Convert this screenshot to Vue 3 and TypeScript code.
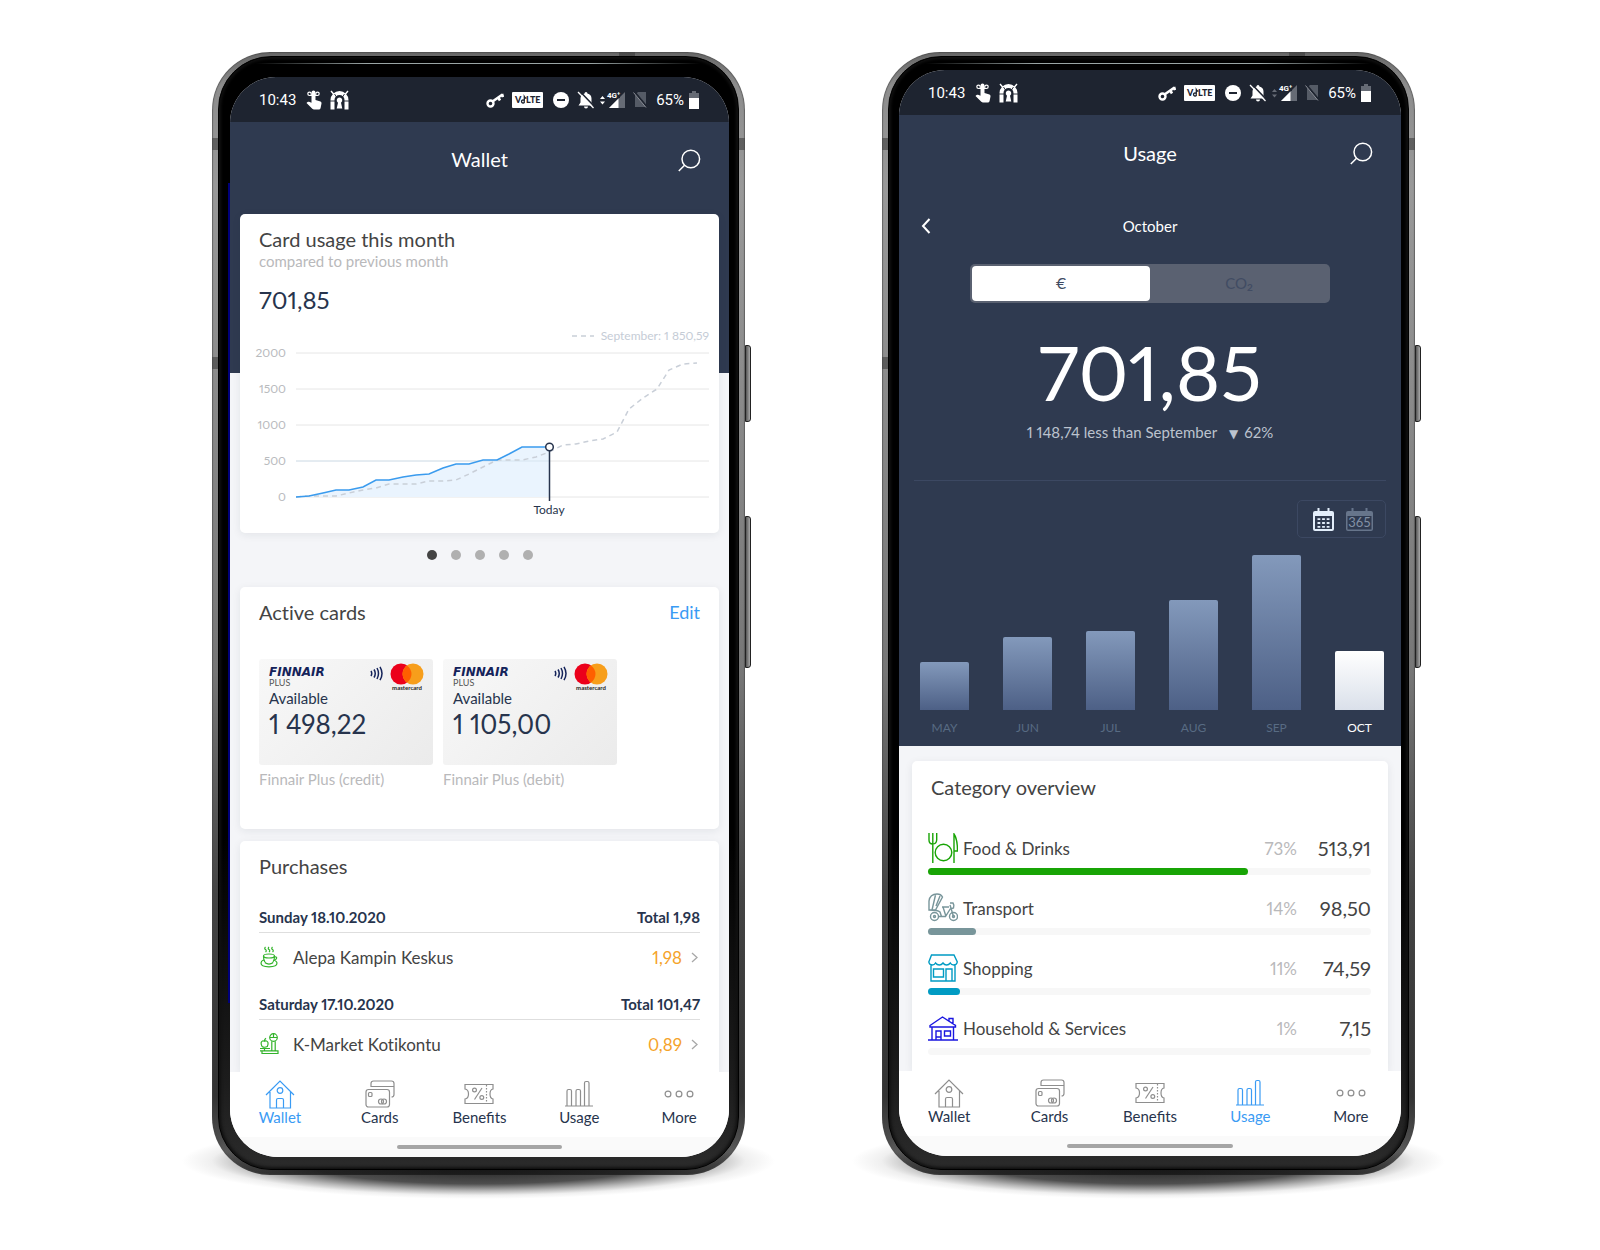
<script setup lang="ts">
interface Tab {
  id: string
  label: string
}
interface Phone {
  id: 'wallet' | 'usage'
  title: string
}
interface Purchase {
  date: string
  total: string
  shop: string
  amount: string
  icon: string
}
interface Category {
  name: string
  share: string
  amount: string
  fill: number
  color: string
  icon: string
}

const phones: Phone[] = [
  { id: 'wallet', title: 'Wallet' },
  { id: 'usage', title: 'Usage' },
]

const tabs: Tab[] = [
  { id: 'wallet', label: 'Wallet' },
  { id: 'cards', label: 'Cards' },
  { id: 'benefits', label: 'Benefits' },
  { id: 'usage', label: 'Usage' },
  { id: 'more', label: 'More' },
]

const gridLines = [
  { label: '2000', y: 27 },
  { label: '1500', y: 63 },
  { label: '1000', y: 99 },
  { label: '500', y: 135 },
  { label: '0', y: 171 },
]

const currentLine =
  '37,171 50,170 64,167 77,164 90,164 104,161 117,154 130,154 144,151 157,149 170,148 184,142 197,138 210,138 224,134 238,134 250,128 263,121 290,121'
const previousLine =
  '37,171 50,170 64,170 77,170 90,167 104,164 117,162 130,158 157,158 170,155 184,155 197,154 210,148 224,141 238,134 263,134 277,131 290,126 304,119 317,118 330,115 344,113 358,106 370,83 384,72 398,63 410,44 424,38 438,37'

const accounts = [
  { balance: '1 498,22', name: 'Finnair Plus (credit)' },
  { balance: '1 105,00', name: 'Finnair Plus (debit)' },
]

const purchases: Purchase[] = [
  { date: 'Sunday 18.10.2020', total: 'Total 1,98', shop: 'Alepa Kampin Keskus', amount: '1,98', icon: 'cup' },
  { date: 'Saturday 17.10.2020', total: 'Total 101,47', shop: 'K-Market Kotikontu', amount: '0,89', icon: 'scale' },
]

const months = [
  { label: 'MAY', height: 48 },
  { label: 'JUN', height: 73 },
  { label: 'JUL', height: 79 },
  { label: 'AUG', height: 110 },
  { label: 'SEP', height: 155 },
  { label: 'OCT', height: 59 },
]

const categories: Category[] = [
  { name: 'Food & Drinks', share: '73%', amount: '513,91', fill: 72.2, color: '#18a405', icon: 'food' },
  { name: 'Transport', share: '14%', amount: '98,50', fill: 10.8, color: '#78959a', icon: 'transport' },
  { name: 'Shopping', share: '11%', amount: '74,59', fill: 7.2, color: '#009bc3', icon: 'shopping' },
  { name: 'Household & Services', share: '1%', amount: '7,15', fill: 0, color: '#1a16e0', icon: 'house' },
]
</script>

<template>
  <main class="stage">
    <section v-for="phone in phones" :key="phone.id" class="phone" :class="phone.id">
      <span class="side-key volume"></span>
      <span class="side-key power"></span>
      <div class="screen">
        <div class="status">
          <span>10:43</span>
          <svg class="hand" width="16" height="20" viewBox="0 0 16 20" fill="#fff">
            <path d="M5.500 2.500a2 2 0 0 1 4 0V10l5 1.500q1.200.5 1 2L14.600 18q-.3 1.500-1.800 1.500H8q-1 0-1.700-.8L.5 13l1-1q.6-.5 1.500-.2l2.500.9Z" />
            <path d="M7.500 5.500H3.500a1.700 1.700 0 1 1 1.700-1.700V5.500M7.500 5.500h4a1.700 1.700 0 1 0-1.700-1.700V5.500" fill="none" stroke="#fff" stroke-width="1.200" />
          </svg>
          <svg width="19" height="20" viewBox="0 0 19 20">
            <path d="M2.500 19.500V10a7 7 0 0 1 14 0V19.500" fill="none" stroke="#fff" stroke-width="4" />
            <path d="M1 1l3 3.500M18 1l-3 3.500" stroke="#fff" stroke-width="1.400" />
            <path d="M0 11h5M14 11h5M4.500 4l2 3M14.500 4l-2 3" stroke="#1e2430" stroke-width="0.900" />
            <path d="M9.500 7.500a2.900 2.900 0 0 1 1.500 5.300l1.300 5.700h-5.600l1.300-5.700a2.900 2.900 0 0 1 1.500-5.300Z" fill="#fff" />
          </svg>
          <span class="spacer"></span>
          <svg width="18" height="18" viewBox="0 0 18 18" fill="none" stroke="#fff">
            <circle cx="4.500" cy="12.500" r="3" stroke-width="2.400" />
            <path d="M6.500 10.500 16.500 3.500M16 3l1 3M12 6l2 3.500" stroke-width="2.600" />
          </svg>
          <svg class="volte" width="31" height="16" viewBox="0 0 31 16">
            <rect width="31" height="16" rx="1" fill="#fff" />
            <text x="3" y="11">V</text>
            <path d="M12.500 9.300a1.500 1.500 0 1 0-.2 1V4.500q1 1.700 2.200 1.500" fill="none" stroke="#1e2430" stroke-width="1.300" />
            <text x="14" y="11">LTE</text>
          </svg>
          <svg width="16" height="16" viewBox="0 0 16 16">
            <circle cx="8" cy="8" r="8" fill="#fff" />
            <path d="M4 8h8" stroke="#1e2430" stroke-width="2" />
          </svg>
          <svg class="bell" width="18" height="18" viewBox="0 0 18 18">
            <path d="M9 1a1.400 1.400 0 0 1 1.400 1.500Q14.500 3.500 14.500 7.500V11.500l2 3H1.500l2-3V7.500Q3.500 3.500 7.600 2.500A1.400 1.400 0 0 1 9 1ZM7 15.500h4q0 2-2 2t-2-2Z" fill="#fff" />
            <path d="M2.500 0 17.800 16" stroke="#1e2430" stroke-width="1.600" />
            <path d="M1 1 16.500 17" stroke="#fff" stroke-width="1.300" />
          </svg>
          <svg class="signal" width="26" height="18" viewBox="0 0 26 18">
            <path d="M0 8h5L2.500 5ZM0 10.500h5L2.500 13.500Z" :fill="phone.id === 'wallet' ? '#fff' : '#666b75'" />
            <path d="M25 1v16H9Z" fill="#666b75" />
            <path d="M18.500 7.500V17H9Z" fill="#fff" />
            <rect x="7" y="0" width="13" height="7" fill="#1e2430" />
            <text x="7" y="6.500">4G⁺</text>
          </svg>
          <svg width="14" height="17" viewBox="0 0 14 17">
            <path d="M5 1h8v15H2V4Z" fill="#555b66" />
            <path d="M1.500 1 14 16" stroke="#1e2430" stroke-width="2" />
            <path d="M.5 1.500 13 16.500" stroke="#8a8e96" stroke-width="1" />
          </svg>
          <span>65%</span>
          <svg class="battery" width="10" height="18" viewBox="0 0 10 18">
            <path d="M3 0h4v2h3v5H0V2h3Z" fill="#666b75" />
            <path d="M0 7h10v11H0Z" fill="#fff" />
          </svg>
        </div>

        <header class="appbar">
          <h1>{{ phone.title }}</h1>
          <button class="search" type="button" aria-label="Search">
            <svg width="23" height="23" viewBox="0 0 23 23" fill="none" stroke="#fff" stroke-width="1.500">
              <circle cx="12.800" cy="10" r="8.800" />
              <path d="M6.500 16.200.8 22" />
            </svg>
          </button>
        </header>

        <div v-if="phone.id === 'wallet'" class="wallet-body">
          <article class="card usage-card">
            <h2>Card usage this month</h2>
            <p class="muted">compared to previous month</p>
            <p class="sum">701,85</p>
            <svg class="trend" viewBox="0 0 450 190">
              <path d="M313 10h22" class="previous" />
              <text x="450" y="14" class="legend">September: 1 850,59</text>
              <g v-for="line in gridLines" :key="line.label">
                <path :d="`M37 ${line.y}H450`" stroke="#e6e6e6" />
                <text x="27" :y="line.y + 4" class="axis">{{ line.label }}</text>
              </g>
              <polygon :points="`${currentLine} 290,171`" fill="#eaf4fe" />
              <path d="M37 135H290" stroke="#d6e4ef" />
              <polyline :points="previousLine" class="previous" />
              <polyline :points="currentLine" fill="none" stroke="#3a9bee" stroke-width="1.500" />
              <path d="M290.500 124V175" stroke="#27344d" stroke-width="1.500" />
              <circle cx="290.500" cy="121" r="3.800" fill="#fff" stroke="#27344d" stroke-width="1.500" />
              <text x="290" y="188" class="today">Today</text>
            </svg>
          </article>

          <div class="dots">
            <button v-for="n in 5" :key="n" type="button" :class="{ active: n === 1 }" :aria-label="`Page ${n}`"></button>
          </div>

          <article class="card">
            <div class="card-head">
              <h2>Active cards</h2>
              <a href="#edit">Edit</a>
            </div>
            <div class="accounts">
              <figure v-for="account in accounts" :key="account.name">
                <div class="plastic">
                  <div class="brand">
                    <div>
                      <strong>FINNAIR</strong>
                      <small>PLUS</small>
                    </div>
                    <svg class="waves" width="13" height="15" viewBox="0 0 13 15" fill="none" stroke="#14235a" stroke-width="1.500">
                      <path d="M1 5q1.500 2.500 0 5M4 3.500q2.500 4 0 8M7 2q3 5.500 0 11M10 .8q4 6.700 0 13.400" />
                    </svg>
                    <svg width="34" height="28" viewBox="0 0 34 28">
                      <circle cx="11" cy="11" r="10.500" fill="#eb001b" />
                      <circle cx="23" cy="11" r="10.500" fill="#f79e1b" />
                      <path d="M17 2.400a10.500 10.500 0 0 1 0 17.200a10.500 10.500 0 0 1 0-17.200Z" fill="#ff5f00" />
                      <text x="17" y="27" class="mc">mastercard</text>
                    </svg>
                  </div>
                  <p class="available">Available</p>
                  <p class="balance">{{ account.balance }}</p>
                </div>
                <figcaption>{{ account.name }}</figcaption>
              </figure>
            </div>
          </article>

          <article class="card purchases">
            <h2>Purchases</h2>
            <section v-for="item in purchases" :key="item.date">
              <h3>
                <span>{{ item.date }}</span>
                <span>{{ item.total }}</span>
              </h3>
              <a class="purchase" href="#purchase">
                <svg width="20" height="24" viewBox="0 0 20 24" fill="none" stroke="#32b32a" stroke-width="1.200">
                  <template v-if="item.icon === 'cup'">
                    <path d="M6.500 2q-1.500 1.500 0 2.500t0 2.500M10 2q-1.500 1.500 0 2.500t0 2.500M13.500 2q-1.500 1.500 0 2.500t0 2.500" />
                    <ellipse cx="10" cy="11" rx="5.500" ry="2" />
                    <path d="M4.500 11q0 8 5.500 8t5.500-8M15.500 12q2.800-.5 2 1.500t-3.500 2.500M4.500 15Q2 16 2 18q0 3.800 8 3.800T18 18q0-1-1.500-2M6 17.800q4 2.500 8 0" />
                  </template>
                  <template v-else>
                    <circle cx="14.500" cy="5.500" r="3.800" />
                    <path d="M11 5.500h7M14.500 2v3.500M12.800 9.300v9.500M16.200 9.300v9.500M1 16.500h10M5.500 16.500v2.500M1 18.800h18v2.700H3v-2.700M3 14.500q-2-4.500.5-5.500 1-.2 2 .3 1-.5 2-.3 2.700 1 .8 5.500-2.800 1.500-5.300 0M5.500 8.800q0-1.500 1.500-2.500" />
                  </template>
                </svg>
                <span class="shop">{{ item.shop }}</span>
                <span class="amount">{{ item.amount }}</span>
                <svg width="7" height="11" viewBox="0 0 7 11" fill="none" stroke="#a8a8a8" stroke-width="1.300">
                  <path d="M1 1l5 4.500-5 4.500" />
                </svg>
              </a>
            </section>
          </article>
        </div>

        <div v-else class="usage-body">
          <div class="panel">
            <div class="month">
              <button type="button" aria-label="Previous month">
                <svg width="10" height="16" viewBox="0 0 10 16" fill="none" stroke="#fff" stroke-width="2">
                  <path d="M8.500 1 2 8l6.500 7" />
                </svg>
              </button>
              <span>October</span>
            </div>
            <div class="units">
              <button type="button" class="on">€</button>
              <button type="button">CO<sub>2</sub></button>
            </div>
            <p class="total">701,85</p>
            <p class="delta"><span>1 148,74 less than September</span><span><i>▼</i>62%</span></p>
            <hr />
            <div class="period">
              <button type="button" aria-label="Monthly">
                <svg width="21" height="23" viewBox="0 0 21 23">
                  <path d="M2 3h17q2 0 2 2v16q0 2-2 2H2q-2 0-2-2V5q0-2 2-2ZM2 8v13h17V8Z" fill="#e3eefb" fill-rule="evenodd" />
                  <path d="M5.500 0v5M15.500 0v5" stroke="#e3eefb" stroke-width="2" />
                  <path d="M4.500 11.200h12M4.500 15h12M4.500 18.800h12" stroke="#e3eefb" stroke-width="1.800" stroke-dasharray="2.800 1.800" />
                </svg>
              </button>
              <button type="button" aria-label="Yearly">
                <svg width="27" height="23" viewBox="0 0 27 23">
                  <path d="M2 3h23q2 0 2 2v16q0 2-2 2H2q-2 0-2-2V5q0-2 2-2ZM1.500 8v13.500h24V8Z" fill="#67758b" fill-rule="evenodd" />
                  <path d="M6.500 0v5M20.500 0v5" stroke="#67758b" stroke-width="2" />
                  <text x="13.500" y="19" class="days">365</text>
                </svg>
              </button>
            </div>
            <ul class="bars">
              <li v-for="month in months" :key="month.label" :class="{ current: month.label === 'OCT' }">
                <span class="bar" :style="{ height: month.height + 'px' }"></span>
                <span>{{ month.label }}</span>
              </li>
            </ul>
          </div>

          <article class="card overview">
            <h2>Category overview</h2>
            <div v-for="cat in categories" :key="cat.name" class="category">
              <div class="line">
                <svg width="30" height="30" viewBox="0 0 30 30" fill="none" :stroke="cat.color" stroke-width="1.400">
                  <template v-if="cat.icon === 'food'">
                    <circle cx="15.500" cy="19.500" r="8.300" />
                    <path d="M1 0v7q0 4 3.700 4T8.700 7V0M4.800 0v30M26 30V1q3.500 5 3.500 17h-3.500" />
                  </template>
                  <template v-else-if="cat.icon === 'transport'">
                    <circle cx="6.500" cy="23.500" r="4" />
                    <circle cx="6.500" cy="23.500" r="1" />
                    <circle cx="25.500" cy="23.500" r="4" />
                    <circle cx="25.500" cy="23.500" r="1" />
                    <path d="M1 17V8q1-7 8-7 4 0 5.500 3L7.500 17ZM4 17 7.500 2M1 17q9 0 11 2l1.500 4.500h4l5-8M10 23.500h4M14 14h7M15 14l3 9.500M22 10h3q1.500 2 .5 5l-3 1M25.500 23.500 22 12M8 13 12 3" />
                  </template>
                  <template v-else-if="cat.icon === 'shopping'">
                    <path d="M3.500 2h22.500l3.300 7q-.5 3-3.500 3-2.500 0-3.500-2-1.500 2-3.700 2T15 10q-1.500 2-3.700 2T7.500 10Q6.500 12 4.300 12 1.300 12 .8 9ZM3 12v16h24V12M5.500 16h10v8h-10ZM18 28V16h6v12" />
                  </template>
                  <template v-else>
                    <path d="M2 12.500 14.500 4l13 8.500V14h-25.500ZM21 8V5.500h4V11M4 14v12.500M25.500 14v12.500M0 27h30M8 27v-9h5v9M8 24h5M16.500 18h6v5h-6Z" />
                  </template>
                </svg>
                <span class="name">{{ cat.name }}</span>
                <span class="share">{{ cat.share }}</span>
                <span class="value">{{ cat.amount }}</span>
              </div>
              <div class="track">
                <div :style="{ width: cat.fill + '%', background: cat.color }"></div>
              </div>
            </div>
          </article>
        </div>

        <nav class="tabs">
          <a v-for="tab in tabs" :key="tab.id" :href="`#${tab.id}`" :class="{ active: tab.id === phone.id }">
            <svg width="30" height="30" viewBox="0 0 30 30" fill="none" stroke="currentColor" stroke-width="1.200">
              <path v-if="tab.id === 'wallet'" d="M1 16 15 2l14 14M5 13v16h20.500V13M11.500 29v-8q0-1.500 1.500-1.500h4q1.500 0 1.500 1.500v8M17.800 11.500a2.800 2.800 0 1 1-5.600 0 2.800 2.800 0 0 1 5.600 0" />
              <template v-else-if="tab.id === 'cards'">
                <rect x="1" y="10.500" width="23.500" height="17.500" rx="2.500" />
                <path d="M6 8V4.500Q6 2 8.500 2h18Q29 2 29 4.500v11q0 2.500-2.500 2.500M6 7.500h23" />
                <rect x="3.500" y="13.500" width="3.500" height="4" rx="1" />
                <circle cx="16" cy="22.500" r="2.500" />
                <circle cx="19" cy="22.500" r="2.500" />
              </template>
              <template v-else-if="tab.id === 'benefits'">
                <path d="M1 5.500h28V10q-3 .5-3 5t3 5v4.500H1V20q3.500-.5 3.500-5T1 10Z" />
                <path d="M18 9 10.500 20.500" />
                <path d="M22.500 6v18" stroke-dasharray="1.500 1.500" />
                <circle cx="10.500" cy="11" r="1.900" />
                <circle cx="17.800" cy="18.500" r="1.900" />
              </template>
              <path v-else-if="tab.id === 'usage'" d="M1 27h28M3 27V12q0-1.500 1.500-1.500h1.500q1.500 0 1.500 1.500v15M12 27V12q0-1.500 1.500-1.500h1.500q1.500 0 1.500 1.500v15M20.500 27V4q0-1.500 1.500-1.500h1.500q1.500 0 1.500 1.500v23" />
              <template v-else>
                <circle cx="4" cy="15" r="2.900" />
                <circle cx="15" cy="15" r="2.900" />
                <circle cx="26" cy="15" r="2.900" />
              </template>
            </svg>
            <span>{{ tab.label }}</span>
          </a>
        </nav>
        <div class="gesture"><span></span></div>
      </div>
    </section>
  </main>
</template>

<style>
body {
  margin: 0;
  background: #fff;
}
</style>

<style scoped>
* {
  box-sizing: border-box;
}
h1, h2, h3, p, ul, figure {
  margin: 0;
  padding: 0;
  font-weight: 400;
}
button {
  margin: 0;
  padding: 0;
  border: 0;
  background: none;
  font: inherit;
  color: inherit;
}
a {
  color: inherit;
  text-decoration: none;
}
svg {
  display: block;
  flex: none;
}
.stage {
  display: grid;
  grid-template-columns: 1fr 1fr;
  align-items: start;
  gap: 137px;
  padding: 52px 185px 72px 212px;
  font-family: Lato, "Noto Sans", sans-serif;
  font-variant-ligatures: none;
  font-variant-numeric: proportional-nums;
  color: #27344d;
}

/* Handset */
.phone {
  position: relative;
  z-index: 0;
  min-width: 0;
  padding: 25px 16px 18px 18px;
  border-radius: 58px;
  background:
    linear-gradient(#3338, #3338) 0 86px / 100% 12px no-repeat,
    linear-gradient(#3338, #3338) 0 305px / 8px 12px no-repeat,
    linear-gradient(#3338, #3338) 407px 0 / 16px 8px no-repeat,
    linear-gradient(180deg, #666 0, #8d8d8d 3%, #999 12%, #777 55%, #444 75%, #333 93%, #555 98%, #222 100%);
  box-shadow: inset 0 0 1px 1px #4449;
}
.phone.usage {
  padding: 18px 14px 19px 17px;
}
.phone::before {
  content: "";
  position: absolute;
  z-index: -1;
  inset: 4px 6px 5px;
  border: 1px solid #000;
  border-radius: 53px;
  background:
    linear-gradient(90deg, transparent, #9aa5a5 25%, #9aa5a5 75%, transparent) 50% 6px / 86% 1px no-repeat,
    linear-gradient(#000 0, #000 70%, #1c1c1c 92%, #2b2b2b 100%);
  box-shadow: inset 0 0 3px 2px #111;
}
.phone.wallet::before {
  background:
    linear-gradient(90deg, transparent, #9aa5a5 25%, #9aa5a5 75%, transparent) 50% 6px / 86% 1px no-repeat,
    linear-gradient(#00007a, #00007a) 9px 126px / 2px 820px no-repeat,
    linear-gradient(#000 0, #000 70%, #1c1c1c 92%, #2b2b2b 100%);
}
.phone::after {
  content: "";
  position: absolute;
  z-index: -2;
  left: -30px;
  right: -30px;
  bottom: -24px;
  height: 76px;
  background: radial-gradient(closest-side, #111 0, #222c 60%, #4446 78%, #8882 90%, transparent 100%);
}
.side-key {
  position: absolute;
  left: 100%;
  width: 6px;
  border: 1px solid #222;
  border-radius: 0 3px 3px 0;
  background: linear-gradient(90deg, #555, #aaa);
}
.volume {
  top: 293px;
  height: 77px;
}
.power {
  top: 464px;
  height: 152px;
}
.screen {
  overflow: hidden;
  border-radius: 46px 46px 48px 48px;
  background: #f4f5f8;
}

.status {
  display: flex;
  align-items: center;
  height: 45px;
  padding: 0 30px 0 29px;
  background: #1e2430;
  color: #fff;
  font: 15px/20px Roboto, sans-serif;
}
.status .hand {
  margin: 0 8px 0 10px;
}
.spacer {
  flex: 1;
}
.volte {
  margin: 0 10px 0 8px;
}
.volte text {
  font: 900 9px Lato, sans-serif;
  fill: #1e2430;
}
.bell {
  margin: 0 5px 0 8px;
}
.signal {
  margin-right: 7px;
}
.signal text {
  font: 700 8px Roboto, sans-serif;
  fill: #fff;
}
.status span:last-of-type {
  margin: 0 5px 0 9px;
}

.appbar {
  display: grid;
  grid-template-columns: 1fr auto 1fr;
  align-items: center;
  height: 76px;
  padding: 0 28px;
  background: #2f3a50;
  color: #fff;
}
.usage .appbar {
  height: 77px;
}
.appbar h1 {
  grid-column: 2;
  padding-bottom: 2px;
  font-size: 20px;
  line-height: 24px;
}
.search {
  justify-self: end;
}

.card {
  border-radius: 5px;
  background: #fff;
  box-shadow: 0 2px 8px #1e243014;
}
h2 {
  font-size: 20px;
  line-height: 24px;
  color: #444;
}

/* Wallet */
.wallet-body {
  padding: 16px 10px 0;
  background: linear-gradient(#2f3a50 175px, #f4f5f8 175px);
}
.wallet-body .card {
  padding: 13px 19px 0;
}
.wallet-body .usage-card {
  padding: 13px 10px 17px 19px;
}
.muted {
  font-size: 15px;
  line-height: 20px;
  color: #b9b9bb;
}
.sum {
  margin: 13px 0 10px;
  font-size: 24px;
  line-height: 32px;
}
.trend {
  width: 100%;
  overflow: visible;
  font-size: 12px;
}
.previous {
  fill: none;
  stroke: #c9cfd8;
  stroke-width: 1.5px;
  stroke-dasharray: 5 4;
}
.legend {
  text-anchor: end;
  fill: #c5ccd6;
}
.axis {
  text-anchor: end;
  fill: #b9bbbe;
}
.today {
  text-anchor: middle;
  fill: #27344d;
}
.dots {
  display: flex;
  justify-content: center;
  gap: 14px;
  margin: 17px 0 27px;
}
.dots button {
  width: 10px;
  height: 10px;
  border-radius: 50%;
  background: #b0b0b0;
}
.dots .active {
  background: #444;
}
.card-head {
  display: flex;
  justify-content: space-between;
  align-items: center;
}
.card-head a {
  font-size: 18px;
  line-height: 24px;
  color: #3a9bf4;
}
.accounts {
  display: flex;
  gap: 10px;
  padding: 35px 0 40px;
}
.plastic {
  width: 174px;
  height: 106px;
  padding: 4px 9px 0 10px;
  border-radius: 3px;
  background: linear-gradient(135deg, #f8f8f8, #ebebeb);
}
.brand {
  display: flex;
  height: 25px;
}
.brand > div {
  flex: 1;
}
.brand strong,
.brand small {
  display: block;
}
.brand strong {
  padding-top: 3px;
  font: italic 700 12px/12px "DejaVu Sans", sans-serif;
  color: #14235a;
}
.brand small {
  font-size: 9px;
  line-height: 10px;
  color: #555;
}
.waves {
  margin: 3px 7px 0 0;
}
.mc {
  font: 700 6px Lato, sans-serif;
  text-anchor: middle;
  fill: #222;
}
.available {
  font-size: 15px;
  line-height: 20px;
}
.balance {
  font-size: 26px;
  line-height: 32px;
}
figcaption {
  margin-top: 4px;
  font-size: 15px;
  line-height: 20px;
  color: #b9b9bb;
}
.wallet-body .purchases {
  margin-top: 12px;
  padding-bottom: 4px;
  border-radius: 5px 5px 0 0;
}
.purchases section {
  padding-top: 13px;
}
.purchases h2 {
  margin-bottom: 16px;
}
h3 {
  display: flex;
  justify-content: space-between;
  padding-bottom: 5px;
  border-bottom: 1px solid #dedede;
  font-size: 15px;
  font-weight: 700;
  line-height: 20px;
}
.purchase {
  display: flex;
  align-items: center;
  height: 48px;
  padding-right: 2px;
  font-size: 17px;
  color: #444;
}
.shop {
  flex: 1;
  margin-left: 14px;
}
.amount {
  margin-right: 9px;
  color: #f5a32a;
}

/* Usage */
.panel {
  padding: 22px 15px 8px;
  background: #2f3a50;
  color: #fff;
}
.month {
  display: grid;
  grid-template-columns: 1fr auto 1fr;
  align-items: center;
  height: 24px;
  padding: 0 7px;
  font-size: 15px;
}
.units {
  display: flex;
  width: 360px;
  height: 39px;
  margin: 26px auto 29px;
  padding: 2px;
  border-radius: 5px;
  background: #5a6171;
}
.units button {
  flex: 1;
  padding-bottom: 2px;
  border-radius: 4px;
  font-size: 15px;
  color: #414c63;
}
.units .on {
  background: #fff;
}
.units sub {
  font-size: 10px;
  font-weight: 700;
  line-height: 0;
  vertical-align: -2px;
}
.total {
  font-size: 76px;
  line-height: 80px;
  text-align: center;
}
.delta {
  display: flex;
  justify-content: center;
  gap: 12px;
  margin-top: 10px;
  font-size: 15px;
  line-height: 20px;
  color: #bcc3ce;
}
.delta i {
  margin-right: 6px;
  font: 12px "DejaVu Sans", sans-serif;
}
hr {
  height: 1px;
  margin: 38px 0 19px;
  border: 0;
  background: #3c4862;
}
.period {
  display: flex;
  align-items: center;
  gap: 12px;
  width: fit-content;
  height: 38px;
  margin-left: auto;
  padding: 0 12px 0 15px;
  border: 1px solid #3c4862;
  border-radius: 5px;
}
.days {
  font: 13px Lato, sans-serif;
  text-anchor: middle;
  fill: #8290a5;
}
.bars {
  display: flex;
  justify-content: space-between;
  align-items: flex-end;
  margin: 17px 2px 0 6px;
  list-style: none;
}
.bars li {
  display: flex;
  flex-direction: column;
  align-items: center;
  gap: 8px;
  font-size: 12px;
  line-height: 20px;
  color: #586b83;
}
.bar {
  width: 49px;
  border-radius: 2px 2px 0 0;
  background: linear-gradient(#8399bb, #4d6086);
}
.bars .current {
  color: #fff;
}
.current .bar {
  background: linear-gradient(#fff, #dae0ea);
}
.usage-body .overview {
  margin: 15px 13px 0;
  padding: 14px 17px 16px 16px;
  border-radius: 5px 5px 0 0;
}
.overview h2 {
  margin: 0 3px 34px;
}
.category + .category {
  margin-top: 18px;
}
.line {
  display: flex;
  align-items: center;
  height: 30px;
  color: #444;
}
.name {
  flex: 1;
  margin-left: 5px;
  font-size: 17px;
}
.share {
  font-size: 17px;
  color: #b9b9bb;
}
.value {
  width: 74px;
  font-size: 20px;
  text-align: right;
}
.track {
  height: 7px;
  margin-top: 5px;
  border-radius: 4px;
  background: #f7f7f7;
}
.track div {
  height: 7px;
  border-radius: 4px;
}

/* Bottom navigation */
.tabs {
  position: relative;
  display: flex;
  height: 65px;
  padding-top: 7px;
  background: #fff;
  color: #8e8e8e;
  font-variant-ligatures: normal;
}
.tabs a {
  display: flex;
  flex: 1;
  flex-direction: column;
  align-items: center;
  font-size: 15px;
  line-height: 16px;
}
.tabs span {
  color: #27344d;
}
.tabs .active,
.tabs .active span {
  color: #3a9bf4;
}
.gesture {
  display: flex;
  justify-content: center;
  align-items: center;
  height: 20px;
  background: #fafafa;
}
.gesture span {
  width: 33%;
  height: 4px;
  border-radius: 2px;
  background: #a5a5a5;
}
</style>
